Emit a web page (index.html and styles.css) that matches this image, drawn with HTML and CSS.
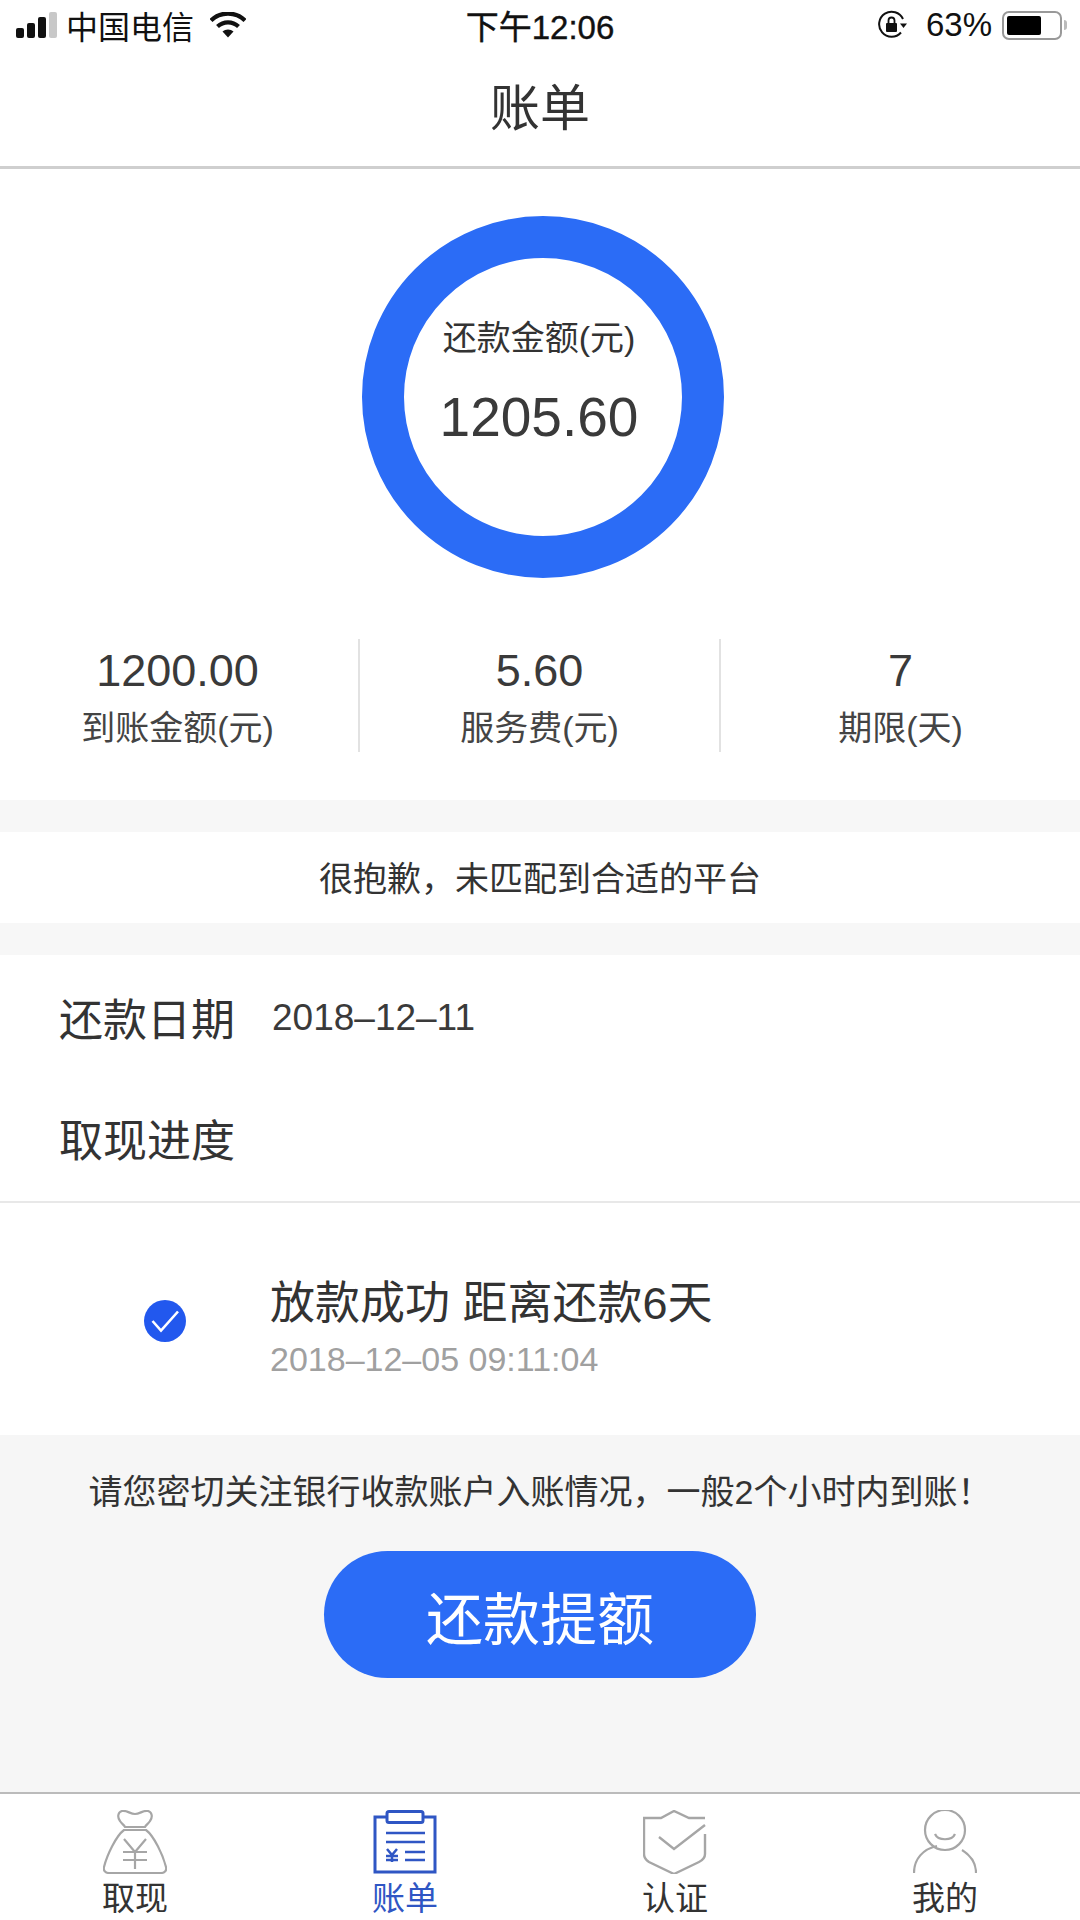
FILE: index.html
```html
<!DOCTYPE html>
<html lang="zh-CN">
<head>
<meta charset="utf-8">
<title>账单</title>
<link rel="stylesheet" href="styles.css">
</head>
<body>
<div class="page">
  <header class="status">
    <div class="status-left">
      <span class="signal"><i class="b1"></i><i class="b2"></i><i class="b3"></i><i class="b4"></i></span>
      <span class="carrier">中国电信</span>
      <svg class="wifi" viewBox="0 0 36 26"><path d="M1 8.500C10.500-.8 25.500-.8 35 8.500" fill="none" stroke="#111" stroke-width="4.200"/><path d="M7.500 14.500C13.500 9 22.500 9 28.500 14.500" fill="none" stroke="#111" stroke-width="4.200"/><path d="M12.500 19.500C15.500 16.800 20.500 16.800 23.500 19.500L18 25.500Z" fill="#111"/></svg>
    </div>
    <div class="status-time">下午12:06</div>
    <div class="status-right">
      <svg class="lock" viewBox="0 0 30 30"><path d="M24 22.500A12.500 12.500 0 1 1 26 9" fill="none" stroke="#111" stroke-width="2"/><path d="M23 13.500h7l-3.500 4.500Z" fill="#111"/><rect x="9" y="13" width="11" height="9" rx="1" fill="#111"/><path d="M11.500 13v-2.500a3 3 0 0 1 6 0V13" fill="none" stroke="#111" stroke-width="1.800"/></svg>
      <span class="percent">63%</span>
      <span class="battery"><span class="battery-fill"></span></span>
      <span class="battery-tip"></span>
    </div>
  </header>
  <nav class="title">账单</nav>

  <section class="summary">
    <div class="ring">
      <div class="ring-label">还款金额(元)</div>
      <div class="ring-value">1205.60</div>
    </div>
    <div class="stats">
      <div class="stat"><div class="stat-value">1200.00</div><div class="stat-label">到账金额(元)</div></div>
      <div class="stat"><div class="stat-value">5.60</div><div class="stat-label">服务费(元)</div></div>
      <div class="stat"><div class="stat-value">7</div><div class="stat-label">期限(天)</div></div>
    </div>
  </section>

  <div class="band"></div>
  <div class="message">很抱歉，未匹配到合适的平台</div>
  <div class="band"></div>

  <section class="details">
    <div class="detail-row date-row"><span class="detail-key">还款日期</span><span class="detail-date">2018–12–11</span></div>
    <div class="detail-row"><span class="detail-key">取现进度</span></div>
  </section>

  <section class="progress">
    <svg class="check" viewBox="0 0 42 42"><circle cx="21" cy="21" r="21" fill="#2258ee"/><path d="M8.500 21l8.500 9.500L34 11.500" fill="none" stroke="#fff" stroke-width="2.600"/></svg>
    <div class="progress-text">
      <div class="progress-title">放款成功 距离还款6天</div>
      <div class="progress-date">2018–12–05 09:11:04</div>
    </div>
  </section>

  <section class="action">
    <p class="notice">请您密切关注银行收款账户入账情况，一般2个小时内到账！</p>
    <button class="repay">还款提额</button>
  </section>

  <footer class="tabs">
    <div class="tab">
      <svg class="tab-icon" viewBox="0 0 64 64" fill="none" stroke="#a6a6a6" stroke-width="2.200" stroke-linejoin="round"><path d="M19 1c5-1 8 3 13 3s8-4 13-3c4 1 5 6 2 10-2 3-4 4-5 6H22c-1-2-3-3-5-6-3-4-2-9 2-10Z"/><path d="M21 20h22c8 6 17 25 20 37 1 4-2 6-5 6H6c-3 0-6-2-5-6C4 45 13 26 21 20Z"/><path d="M21 29l11 13 11-13M32 42v17M20 42h24M20 50h24"/></svg>
      <span>取现</span>
    </div>
    <div class="tab active">
      <svg class="tab-icon" viewBox="0 0 64 64" fill="none" stroke="#2f56c4" stroke-width="3"><path d="M14 7H2v55h60V7H50"/><rect x="14" y="1.500" width="36" height="11" rx="2"/><path d="M13 23h39M13 32h39M32 42h20M32 50h20" stroke-width="2.500"/><path d="M14 39l5 6 5-6M19 45v7M13 46h12M13 50h12" stroke-width="2.500"/></svg>
      <span>账单</span>
    </div>
    <div class="tab">
      <svg class="tab-icon" viewBox="0 0 64 64" fill="none" stroke="#a6a6a6" stroke-width="2.400"><path d="M62 8H46L31 1 18 8H1v36c0 4 2 6 5 8l25 12 25-12c4-2 6-4 6-8V24"/><path d="M16 27l15 12L62 15"/></svg>
      <span>认证</span>
    </div>
    <div class="tab">
      <svg class="tab-icon" viewBox="0 0 64 64" fill="none" stroke="#a6a6a6" stroke-width="2.200"><circle cx="32" cy="20" r="20"/><path d="M22 24c3 7 17 7 20 0"/><path d="M1 63C1 49 10 39 24 36M49 40c8 5 14 13 14 23"/></svg>
      <span>我的</span>
    </div>
  </footer>
</div>
</body>
</html>
```

FILE: styles.css
```css
* { box-sizing: border-box; }
html, body { margin: 0; padding: 0; }
body { background: #fff; font-family: "Liberation Sans", "Noto Sans CJK SC", sans-serif; color: #333; }
.page { width: 1080px; height: 1920px; overflow: hidden; display: flex; flex-direction: column; }

.status { height: 50px; display: grid; grid-template-columns: 1fr auto 1fr; align-items: center; padding: 0 16px; color: #111; font-size: 32px; }
.status-left { display: flex; align-items: center; }
.signal { display: flex; align-items: flex-end; gap: 3px; height: 26px; width: 42px; }
.signal i { display: block; width: 8px; background: #111; border-radius: 2px; }
.signal .b1 { height: 10px; }
.signal .b2 { height: 15px; }
.signal .b3 { height: 21px; }
.signal .b4 { height: 26px; background: #c8c8c8; }
.carrier { margin-left: 8px; }
.wifi { width: 36px; height: 26px; margin-left: 16px; }
.status-time { font-size: 33px; -webkit-text-stroke: 0.4px #111; }
.status-right { display: flex; align-items: center; justify-content: flex-end; margin-right: -3px; }
.lock { width: 30px; height: 30px; }
.percent { margin-left: 19px; font-size: 33px; }
.battery { width: 60px; height: 29px; margin-left: 10px; border: 2px solid #999; border-radius: 7px; padding: 3px; display: block; }
.battery-fill { display: block; width: 34px; height: 100%; background: #000; border-radius: 2px; }
.battery-tip { width: 3px; height: 10px; margin-left: 2px; background: #bbb; border-radius: 0 3px 3px 0; }

.title { height: 119px; display: flex; align-items: center; justify-content: center; font-size: 50px; border-bottom: 3px solid #cfcfcf; padding-bottom: 8px; }

.summary { display: flex; flex-direction: column; align-items: center; height: 631px; padding-top: 47px; }
.ring { width: 362px; height: 362px; margin-left: 6px; flex: none; border-radius: 50%; border: 42px solid #2b6cf6; padding-right: 8px; display: flex; flex-direction: column; align-items: center; }
.ring-label { margin-top: 55px; font-size: 34px; line-height: 50px; white-space: nowrap; }
.ring-value { margin-top: 19px; font-size: 55px; line-height: 70px; color: #3a3a3a; }
.stats { margin-top: 61px; margin-left: -3px; width: calc(100% + 3px); align-self: flex-start; display: grid; grid-template-columns: repeat(3, 1fr); }
.stat { height: 113px; padding-top: 2px; display: flex; flex-direction: column; align-items: center; border-left: 2px solid #e2e2e2; }
.stat:first-child { border-left: 0; }
.stat-value { font-size: 45px; line-height: 60px; color: #3a3a3a; }
.stat-label { font-size: 34px; line-height: 54px; color: #444; }

.band { height: 32px; background: #f7f7f7; flex: none; }
.message { height: 91px; padding-bottom: 2px; display: flex; align-items: center; justify-content: center; font-size: 34px; }

.details { height: 248px; border-bottom: 2px solid #e8e8e8; padding: 1px 59px 0; display: flex; flex-direction: column; }
.detail-row { height: 121px; display: flex; align-items: center; }
.detail-key { font-size: 44px; }
.detail-date { margin-left: 37px; margin-top: 3px; font-size: 37px; color: #3a3a3a; }

.progress { height: 232px; display: flex; align-items: center; padding-left: 144px; }
.check { width: 42px; height: 42px; flex: none; margin-top: 4px; }
.progress-text { margin-left: 84px; margin-top: 20px; }
.progress-title { font-size: 45px; line-height: 60px; white-space: nowrap; }
.progress-date { font-size: 34px; line-height: 50px; color: #a0a0a0; white-space: nowrap; }

.action { height: 357px; background: #f6f6f6; display: flex; flex-direction: column; align-items: center; padding-top: 32px; }
.notice { margin: 0; font-size: 34px; line-height: 50px; white-space: nowrap; }
.repay { margin-top: 34px; width: 432px; height: 127px; border: 0; border-radius: 64px; background: #2b6cf6; color: #fff; font-family: inherit; font-size: 57px; padding: 0; }

.tabs { border-top: 2px solid #bbb; display: grid; grid-template-columns: repeat(4, 1fr); padding-top: 16px; background: #fff; flex: none; height: 128px; }
.tab { display: flex; flex-direction: column; align-items: center; font-size: 33px; line-height: 40px; color: #333; }
.tab.active { color: #2f56c4; }
.tab-icon { width: 64px; height: 64px; display: block; margin-bottom: 5px; flex: none; }
```
